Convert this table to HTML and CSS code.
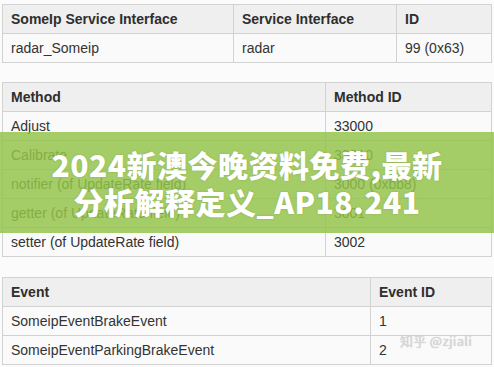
FILE: index.html
```html
<!DOCTYPE html>
<html lang="zh">
<head>
<meta charset="utf-8">
<title>SomeIp</title>
<link rel="stylesheet" href="styles.css">
</head>
<body>
<div class="page">
  <table class="tbl t1">
    <colgroup><col class="c1a"><col class="c1b"><col></colgroup>
    <thead><tr><th>SomeIp Service Interface</th><th>Service Interface</th><th>ID</th></tr></thead>
    <tbody><tr><td>radar_Someip</td><td>radar</td><td>99 (0x63)</td></tr></tbody>
  </table>
  <table class="tbl t2">
    <colgroup><col class="c2a"><col></colgroup>
    <thead><tr><th>Method</th><th>Method ID</th></tr></thead>
    <tbody>
      <tr><td>Adjust</td><td>33000</td></tr>
      <tr><td>Calibrate</td><td>33010</td></tr>
      <tr><td>notifier (of UpdateRate field)</td><td>3000 (0xbb8)</td></tr>
      <tr><td>getter (of UpdateRate field)</td><td>3001</td></tr>
      <tr><td>setter (of UpdateRate field)</td><td>3002</td></tr>
    </tbody>
  </table>
  <table class="tbl t3">
    <colgroup><col class="c3a"><col></colgroup>
    <thead><tr><th>Event</th><th>Event ID</th></tr></thead>
    <tbody>
      <tr><td>SomeipEventBrakeEvent</td><td>1</td></tr>
      <tr><td>SomeipEventParkingBrakeEvent</td><td>2</td></tr>
    </tbody>
  </table>
  <div class="banner">
    <div class="banner-title">2024新澳今晚资料免费,最新<br>分析解释定义_AP18.241</div>
  </div>
  <div class="watermark">知乎 @zjiali</div>
</div>
</body>
</html>
```

FILE: styles.css
```css
html, body {
  margin: 0;
  padding: 0;
  background: #fbfbfb;
}
.page {
  position: relative;
  width: 494px;
  height: 367px;
  padding: 4px 2px 0 2px;
  box-sizing: border-box;
  font-family: "Liberation Sans", Arial, sans-serif;
  font-size: 14px;
  color: #333;
  overflow: hidden;
}
.tbl {
  width: 490px;
  border-collapse: collapse;
  table-layout: fixed;
  background: #fafafa;
  margin-bottom: 20px;
}
.t1 { margin-bottom: 19px; }
.tbl th, .tbl td {
  border: 1px solid #d2d2d2;
  padding: 6px 8px;
  line-height: 16px;
  text-align: left;
  white-space: nowrap;
}
.tbl th {
  background: #efefef;
  font-weight: bold;
  color: #2e2e2e;
}
.c1a { width: 231px; }
.c1b { width: 163px; }
.c2a { width: 323px; }
.c3a { width: 368px; }
.t3 { margin-top: 1px; }
.banner {
  position: absolute;
  left: 0;
  top: 132px;
  width: 494px;
  height: 101px;
  background: rgba(148, 196, 74, 0.84);
  display: flex;
  align-items: center;
  justify-content: center;
}
.banner-title {
  font-family: "Noto Sans CJK SC", "Noto Sans", sans-serif;
  font-weight: 900;
  font-size: 30px;
  line-height: 37px;
  color: #fff;
  text-align: center;
  letter-spacing: 0.5px;
  text-shadow: 0 0 2px rgba(80, 110, 30, 0.35);
}
.watermark {
  position: absolute;
  left: 400px;
  top: 331px;
  font-family: "Noto Sans CJK SC", "Noto Sans", sans-serif;
  font-size: 13px;
  color: #d8d8d8;
  letter-spacing: 0.3px;
  text-shadow: 0 0 1px #bbb;
}
```
